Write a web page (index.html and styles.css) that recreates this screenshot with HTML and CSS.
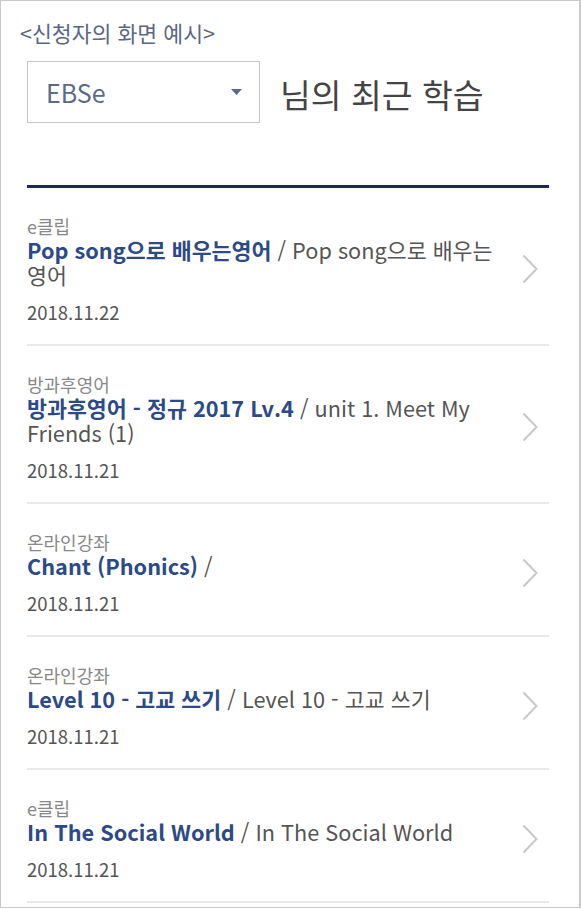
FILE: index.html
```html
<!DOCTYPE html>
<html lang="ko">
<head>
<meta charset="utf-8">
<title>최근 학습</title>
<link rel="stylesheet" href="styles.css">
</head>
<body>
<div class="frame">
  <div class="caption">&lt;신청자의 화면 예시&gt;</div>
  <div class="main">
    <div class="select-row">
      <div class="select">
        <span class="select-value">EBSe</span>
        <svg class="select-arrow" width="11" height="6" viewBox="0 0 11 6"><polygon points="0,0 11,0 5.5,6" fill="#5b6a8a"/></svg>
      </div>
      <h1 class="page-title">님의 최근 학습</h1>
    </div>
    <ul class="list">
      <li class="item">
        <div class="item-body">
          <div class="item-cat">e클립</div>
          <div class="item-title"><strong class="item-course">Pop song으로 배우는영어</strong> / Pop song으로 배우는 영어</div>
          <div class="item-date">2018.11.22</div>
        </div>
        <svg class="chevron" width="16" height="30" viewBox="0 0 16 30"><polyline points="1.5,1.5 14.5,15 1.5,28.5" fill="none" stroke="#c8c8c8" stroke-width="2"/></svg>
      </li>
      <li class="item">
        <div class="item-body">
          <div class="item-cat">방과후영어</div>
          <div class="item-title"><strong class="item-course">방과후영어 - 정규 2017 Lv.4</strong> / unit 1. Meet My Friends (1)</div>
          <div class="item-date">2018.11.21</div>
        </div>
        <svg class="chevron" width="16" height="30" viewBox="0 0 16 30"><polyline points="1.5,1.5 14.5,15 1.5,28.5" fill="none" stroke="#c8c8c8" stroke-width="2"/></svg>
      </li>
      <li class="item">
        <div class="item-body">
          <div class="item-cat">온라인강좌</div>
          <div class="item-title"><strong class="item-course">Chant (Phonics)</strong> /</div>
          <div class="item-date">2018.11.21</div>
        </div>
        <svg class="chevron" width="16" height="30" viewBox="0 0 16 30"><polyline points="1.5,1.5 14.5,15 1.5,28.5" fill="none" stroke="#c8c8c8" stroke-width="2"/></svg>
      </li>
      <li class="item">
        <div class="item-body">
          <div class="item-cat">온라인강좌</div>
          <div class="item-title"><strong class="item-course">Level 10 - 고교 쓰기</strong> / Level 10 - 고교 쓰기</div>
          <div class="item-date">2018.11.21</div>
        </div>
        <svg class="chevron" width="16" height="30" viewBox="0 0 16 30"><polyline points="1.5,1.5 14.5,15 1.5,28.5" fill="none" stroke="#c8c8c8" stroke-width="2"/></svg>
      </li>
      <li class="item">
        <div class="item-body">
          <div class="item-cat">e클립</div>
          <div class="item-title"><strong class="item-course">In The Social World</strong> / In The Social World</div>
          <div class="item-date">2018.11.21</div>
        </div>
        <svg class="chevron" width="16" height="30" viewBox="0 0 16 30"><polyline points="1.5,1.5 14.5,15 1.5,28.5" fill="none" stroke="#c8c8c8" stroke-width="2"/></svg>
      </li>
    </ul>
  </div>
</div>
</body>
</html>
```
FILE: styles.css
```css
html, body {
  margin: 0;
  padding: 0;
  background: #ffffff;
}
body {
  font-family: "Noto Sans CJK KR", "Noto Sans", sans-serif;
}
.frame {
  width: 581px;
  height: 908px;
  box-sizing: border-box;
  border: 1px solid #c9c9c9;
  border-right-width: 2px;
  overflow: hidden;
}
.caption {
  padding: 20px 0 0 19px;
  font-size: 21.6px;
  line-height: 24px;
  color: #5a6784;
}
.main {
  padding: 0 30px 0 26px;
}
.select-row {
  display: flex;
  align-items: center;
  margin-top: 16px;
}
.select {
  width: 233px;
  height: 62px;
  box-sizing: border-box;
  border: 1px solid #c4c4c4;
  display: flex;
  align-items: center;
  justify-content: space-between;
  padding: 0 17px 0 18px;
}
.select-value {
  font-size: 25px;
  color: #5b6a8a;
}
.page-title {
  margin: 2px 0 0 20px;
  font-size: 33.5px;
  font-weight: 400;
  color: #444444;
}
.list {
  list-style: none;
  margin: 62px 0 0 0;
  padding: 0;
  border-top: 3px solid #1d2a4b;
}
.item {
  display: flex;
  align-items: center;
  border-bottom: 2px solid #e8e8e8;
  padding: 27px 11px 21px 0;
}
.item-body {
  flex: 1;
  padding-right: 20px;
  word-break: keep-all;
}
.item-cat {
  font-size: 18px;
  line-height: 22px;
  color: #888888;
}
.item-title {
  font-size: 21.7px;
  line-height: 25px;
  color: #555555;
}
.item-course {
  font-weight: 700;
  color: #2c4a86;
}
.item-date {
  margin-top: 14px;
  font-size: 18.5px;
  line-height: 22px;
  color: #555555;
}
.chevron {
  flex: none;
}
```
